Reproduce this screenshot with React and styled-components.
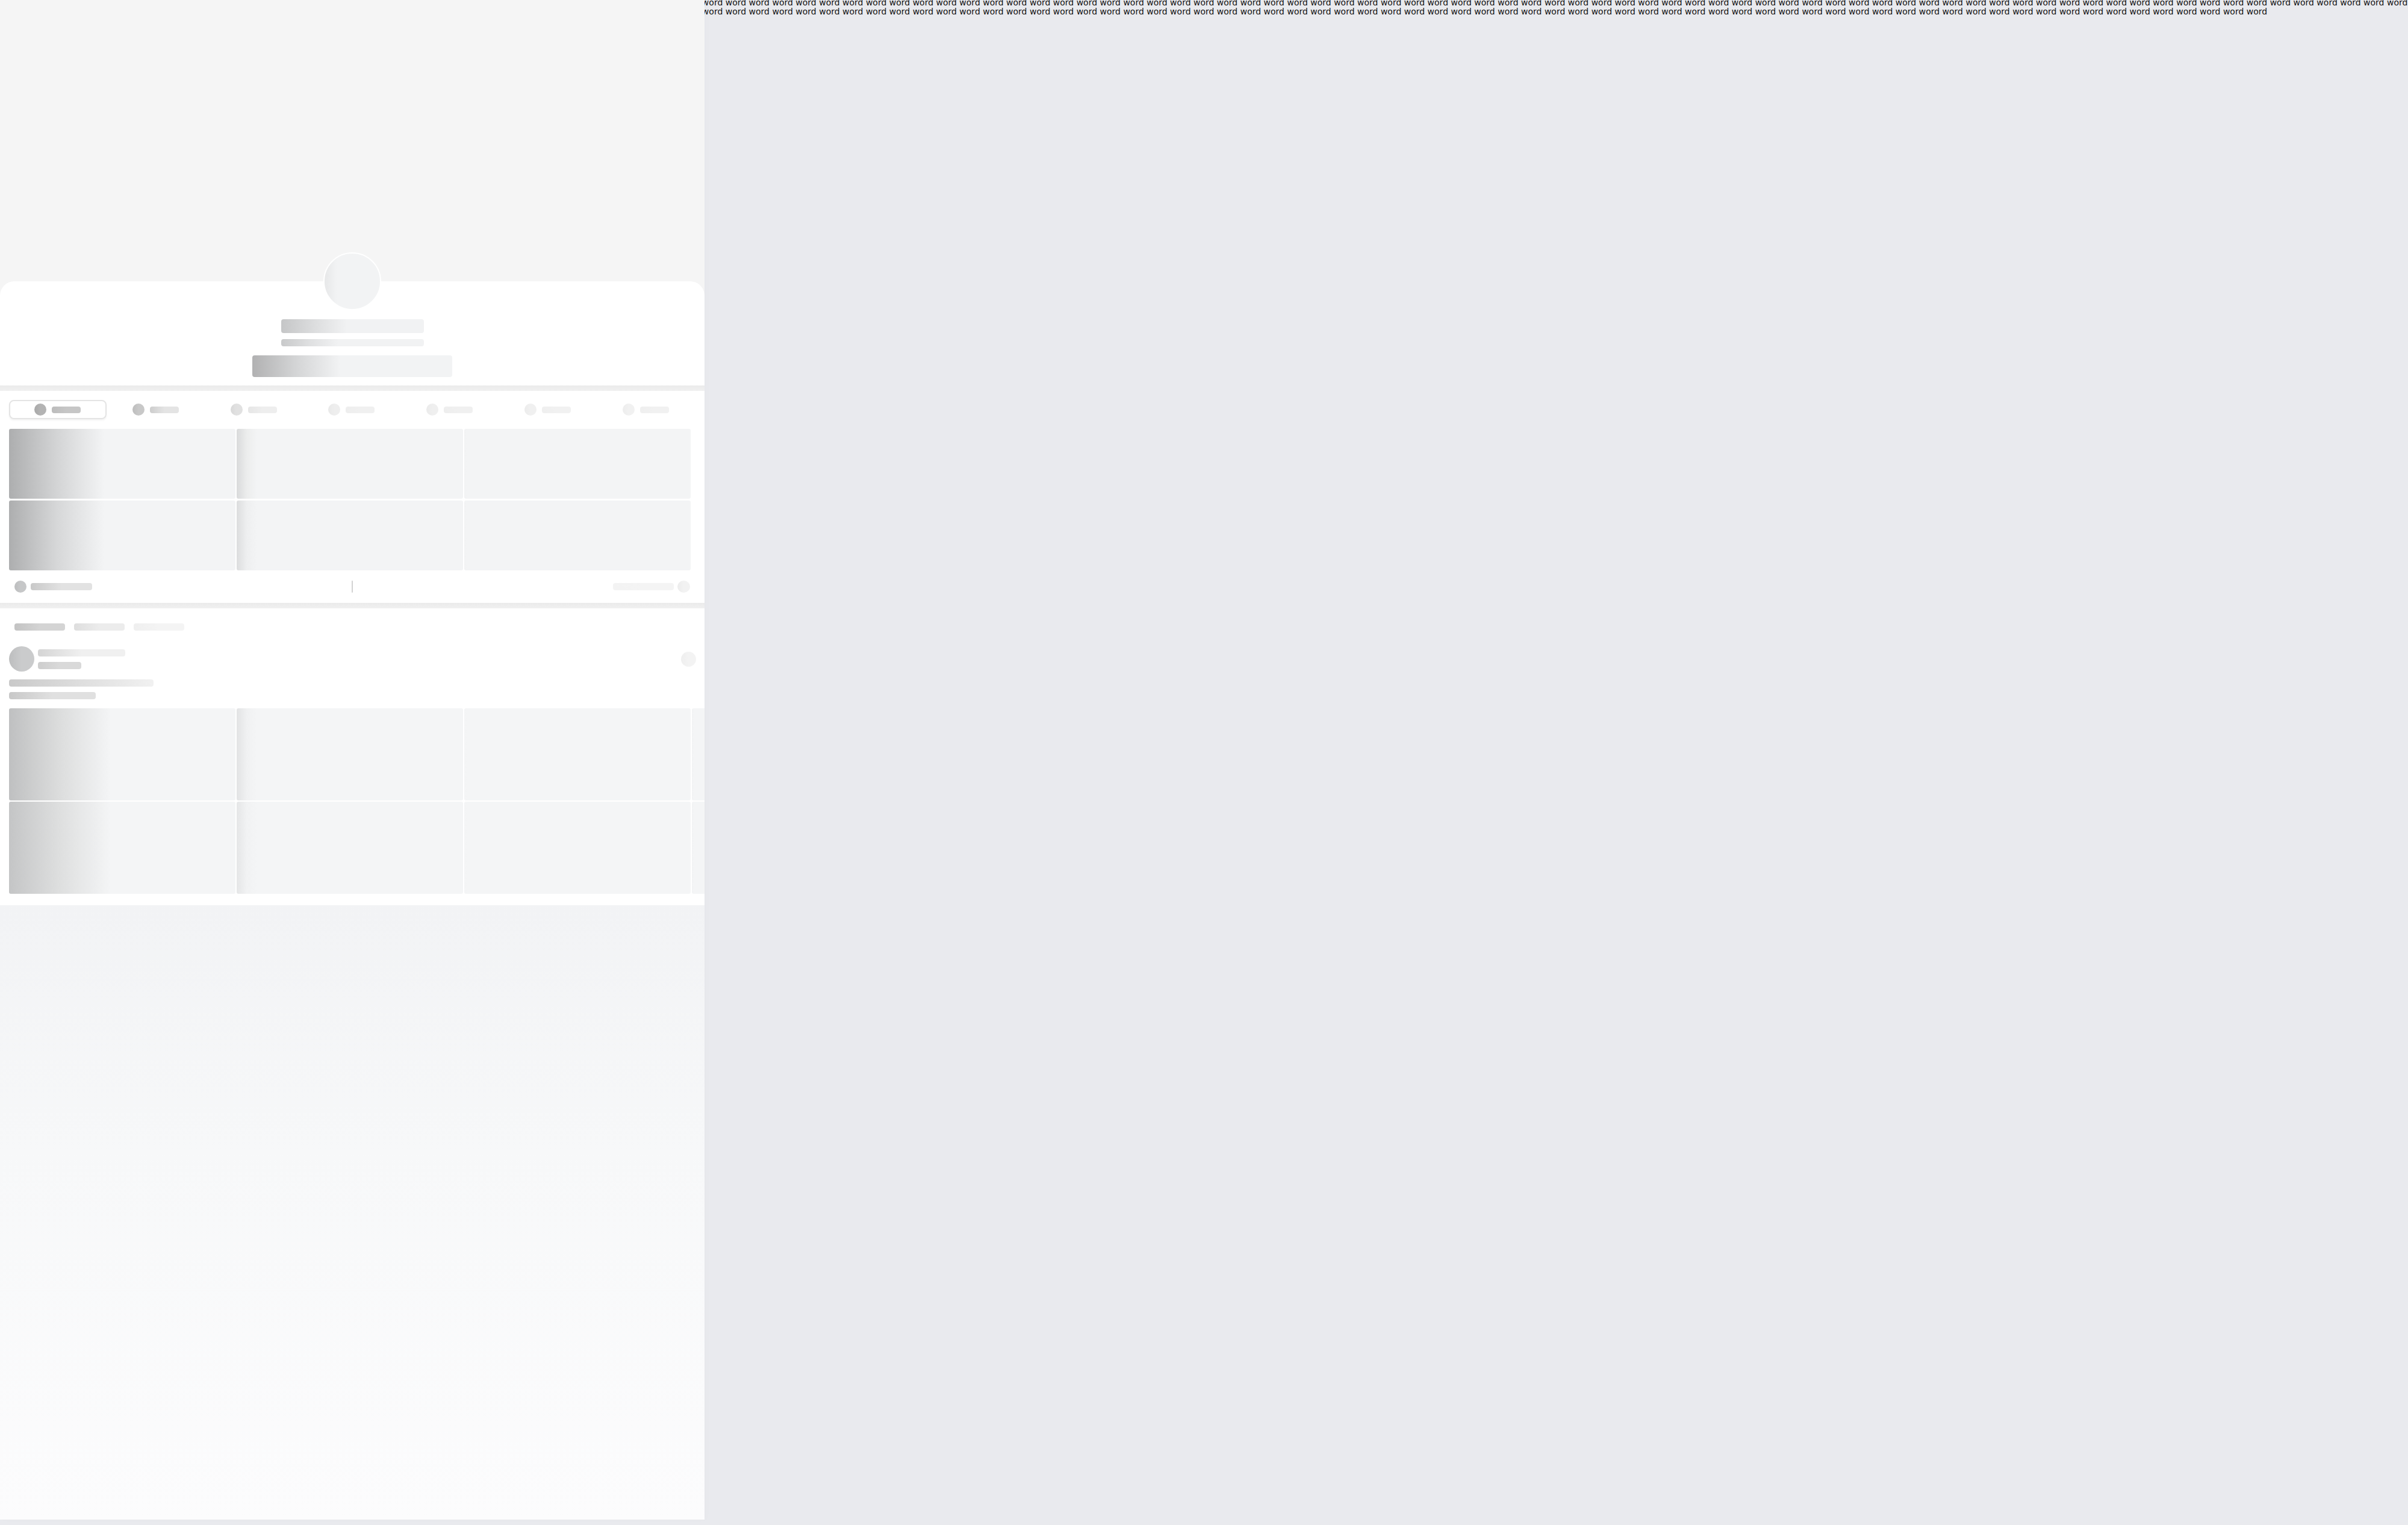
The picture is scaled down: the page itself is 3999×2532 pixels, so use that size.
import React from "react";
import styled, { createGlobalStyle } from "styled-components";

const GlobalStyle = createGlobalStyle`
  html, body { margin: 0; padding: 0; }
  body { background: #e9eaee; }
`;

const Page = styled.div`
  position: relative;
  min-height: 2532px;
  background: #e9eaee;
  overflow: hidden;
`;

const TextStrip = styled.p`
  margin: -3px 0 0 0;
  font-family: "DejaVu Sans", sans-serif;
  font-size: 14px;
  line-height: 15px;
  color: #111;
`;

const Panel = styled.div`
  position: absolute;
  top: 0;
  left: 0;
  z-index: 1;
  width: 1170px;
  height: 2523px;
  overflow: hidden;
  display: flex;
  flex-direction: column;
  background: #f5f5f5;
  box-shadow: 3px 0 10px rgba(0, 0, 0, 0.015);
`;

const Cover = styled.div`
  height: 467px;
  flex-shrink: 0;
`;

const ProfileCard = styled.section`
  background: #fff;
  border-radius: 24px 24px 0 0;
  display: flex;
  flex-direction: column;
  align-items: center;
  padding-bottom: 14px;
`;

const Divider = styled.div`
  height: 9px;
  flex-shrink: 0;
  background: linear-gradient(180deg, #ebebeb, #f0f0f0);
`;

const Sk = styled.div`
  flex-shrink: 0;
  width: ${(p) => p.$w}px;
  height: ${(p) => p.$h}px;
  border-radius: ${(p) => (p.$round ? "50%" : `${p.$r ?? 4}px`)};
  background: linear-gradient(
    90deg,
    ${(p) => p.$from} 0%,
    ${(p) => p.$mid ?? p.$to} ${(p) => (p.$stop ?? 40) / 2}%,
    ${(p) => p.$to} ${(p) => p.$stop ?? 40}%,
    ${(p) => p.$to} 100%
  );
`;

const Avatar = styled(Sk)`
  margin-top: -48px;
  border: 2px solid #fff;
  box-sizing: border-box;
`;

const NameBar = styled(Sk)`
  margin-top: 15px;
`;
const SubBar = styled(Sk)`
  margin-top: 10px;
`;
const ButtonBar = styled(Sk)`
  margin-top: 15px;
`;

const Card = styled.section`
  background: #fff;
  padding: ${(p) => p.$pad};
  display: flex;
  flex-direction: column;
`;

const TabsRow = styled.div`
  display: grid;
  grid-template-columns: repeat(7, 1fr);
  width: 1139px;
`;

const Tab = styled.div`
  height: 32px;
  box-sizing: border-box;
  display: flex;
  align-items: center;
  justify-content: center;
  gap: 9px;
  border-radius: 8px;
  border: 2px solid ${(p) => (p.$active ? "#e4e4e4" : "transparent")};
  box-shadow: ${(p) => (p.$active ? "0 2px 3px rgba(0,0,0,0.05)" : "none")};
  margin-right: 1px;
`;

const TileGrid = styled.div`
  margin-top: ${(p) => p.$mt}px;
  display: grid;
  grid-auto-flow: column;
  grid-template-rows: repeat(2, ${(p) => p.$rowH}px);
  grid-auto-columns: 376px;
  column-gap: 2px;
  row-gap: ${(p) => p.$rowGap}px;
`;

const Tile = styled(Sk)`
  width: auto;
  height: auto;
  border-radius: 3px;
`;

const FooterRow = styled.div`
  margin-top: 17px;
  height: 20px;
  display: grid;
  grid-template-columns: 1fr auto 1fr;
  align-items: center;
  padding: 0 9px 0 9px;
  width: 1122px;
`;

const Cluster = styled.div`
  display: flex;
  align-items: center;
  gap: ${(p) => p.$gap ?? 7}px;
  justify-content: ${(p) => (p.$end ? "flex-end" : "flex-start")};
`;

const VLine = styled.div`
  width: 2px;
  height: 20px;
  background: #d2d2d2;
  border-radius: 1px;
`;

const PillRow = styled.div`
  display: flex;
  gap: 15px;
  padding-left: 9px;
`;

const AuthorRow = styled.div`
  margin-top: 26px;
  display: flex;
  align-items: center;
  justify-content: space-between;
  width: 1141px;
`;

const AuthorText = styled.div`
  display: flex;
  flex-direction: column;
  gap: 9px;
`;

const Lines = styled.div`
  margin-top: 13px;
  display: flex;
  flex-direction: column;
  gap: 9px;
`;

const Rest = styled.div`
  flex: 1;
  background: linear-gradient(180deg, #f2f3f5 0%, #f7f8f9 40%, #fcfcfd 100%);
`;

const tabTones = [
  { c: ["#a9a9a9", "#b3b3b3"], b: ["#bcbcbc", "#c6c6c6"] },
  { c: ["#bdbdbd", "#c8c8c8"], b: ["#cdcdcd", "#e4e4e4"] },
  { c: ["#d9d9d9", "#e1e1e1"], b: ["#e6e6e6", "#eeeeee"] },
  { c: ["#e9e9e9", "#eeeeee"], b: ["#eeeeee", "#f0f0f0"] },
  { c: ["#ebebeb", "#efefef"], b: ["#eeeeee", "#f0f0f0"] },
  { c: ["#ececec", "#f0f0f0"], b: ["#efefef", "#f1f1f1"] },
  { c: ["#ededed", "#f1f1f1"], b: ["#efefef", "#f1f1f1"] },
];

const grid1 = [
  { from: "#adaeaf", mid: "#d3d4d5", stop: 42 },
  { from: "#adaeaf", mid: "#d6d7d8", stop: 42 },
  { from: "#d9dadb", mid: "#eceded", stop: 9 },
  { from: "#dcddde", mid: "#eeeff0", stop: 9 },
  { from: "#f1f2f3", stop: 2 },
  { from: "#f1f2f3", stop: 2 },
];

const grid2 = [
  { from: "#bfc0c1", mid: "#dcdddd", stop: 45 },
  { from: "#c4c5c6", mid: "#dedfdf", stop: 45 },
  { from: "#e2e3e4", mid: "#f0f1f2", stop: 9 },
  { from: "#e5e6e7", mid: "#f1f2f3", stop: 9 },
  { from: "#f3f4f5", stop: 2 },
  { from: "#f3f4f5", stop: 2 },
  { from: "#f2f3f4", stop: 2 },
  { from: "#f2f3f4", stop: 2 },
];

const words = Array.from({ length: 200 }, () => "word").join(" ");

export default function App() {
  return (
    <Page>
      <GlobalStyle />
      <TextStrip>{words}</TextStrip>
      <Panel>
        <Cover />
        <ProfileCard>
          <Avatar $round $w={96} $h={96} $from="#e7e8e9" $to="#f2f3f4" $stop={45} />
          <NameBar $w={237} $h={23} $from="#c5c6c7" $mid="#dcddde" $to="#f1f2f3" $stop={46} />
          <SubBar $w={237} $h={12} $from="#c8c9ca" $mid="#dfe0e1" $to="#f1f2f3" $stop={40} />
          <ButtonBar $w={332} $h={36} $from="#b1b1b2" $mid="#d4d5d6" $to="#f2f3f4" $stop={44} />
        </ProfileCard>
        <Divider />
        <Card $pad="15px 0 17px 15px">
          <TabsRow>
            {tabTones.map((t, i) => (
              <Tab key={i} $active={i === 0}>
                <Sk $round $w={20} $h={20} $from={t.c[0]} $to={t.c[1]} $stop={100} />
                <Sk $w={48} $h={11} $from={t.b[0]} $to={t.b[1]} $stop={100} />
              </Tab>
            ))}
          </TabsRow>
          <TileGrid $mt={16} $rowH={116} $rowGap={3}>
            {grid1.map((g, i) => (
              <Tile key={i} $from={g.from} $mid={g.mid} $to="#f3f4f5" $stop={g.stop} />
            ))}
          </TileGrid>
          <FooterRow>
            <Cluster>
              <Sk $round $w={20} $h={20} $from="#bcbdbe" $to="#c6c7c8" $stop={100} />
              <Sk $w={102} $h={12} $from="#c9c9c9" $to="#e2e2e2" $stop={100} />
            </Cluster>
            <VLine />
            <Cluster $end $gap={6}>
              <Sk $w={101} $h={12} $from="#f3f3f3" $to="#f4f4f4" $stop={100} />
              <Sk $round $w={21} $h={20} $from="#ececec" $to="#f2f2f2" $stop={100} />
            </Cluster>
          </FooterRow>
        </Card>
        <Divider />
        <Card $pad="25px 0 19px 15px">
          <PillRow>
            <Sk $w={84} $h={12} $from="#c3c3c3" $to="#d4d4d4" $stop={100} />
            <Sk $w={84} $h={12} $from="#dedede" $to="#ececec" $stop={100} />
            <Sk $w={84} $h={12} $from="#efefef" $to="#f4f4f4" $stop={100} />
          </PillRow>
          <AuthorRow>
            <Cluster $gap={6}>
              <Sk $round $w={42} $h={42} $from="#bdbebf" $to="#cacbcc" $stop={100} />
              <AuthorText>
                <Sk $w={145} $h={12} $from="#d4d4d4" $to="#f0f0f0" $stop={100} />
                <Sk $w={72} $h={12} $from="#cdcdcd" $to="#d9d9d9" $stop={100} />
              </AuthorText>
            </Cluster>
            <Sk $round $w={25} $h={25} $from="#efefef" $to="#f3f3f3" $stop={100} />
          </AuthorRow>
          <Lines>
            <Sk $w={240} $h={12} $from="#c9c9c9" $mid="#dedede" $to="#f1f1f1" $stop={100} />
            <Sk $w={144} $h={12} $from="#c8c8c8" $to="#e0e0e0" $stop={100} />
          </Lines>
          <TileGrid $mt={15} $rowH={153} $rowGap={2}>
            {grid2.map((g, i) => (
              <Tile key={i} $from={g.from} $mid={g.mid} $to="#f4f5f6" $stop={g.stop} />
            ))}
          </TileGrid>
        </Card>
        <Rest />
      </Panel>
    </Page>
  );
}
